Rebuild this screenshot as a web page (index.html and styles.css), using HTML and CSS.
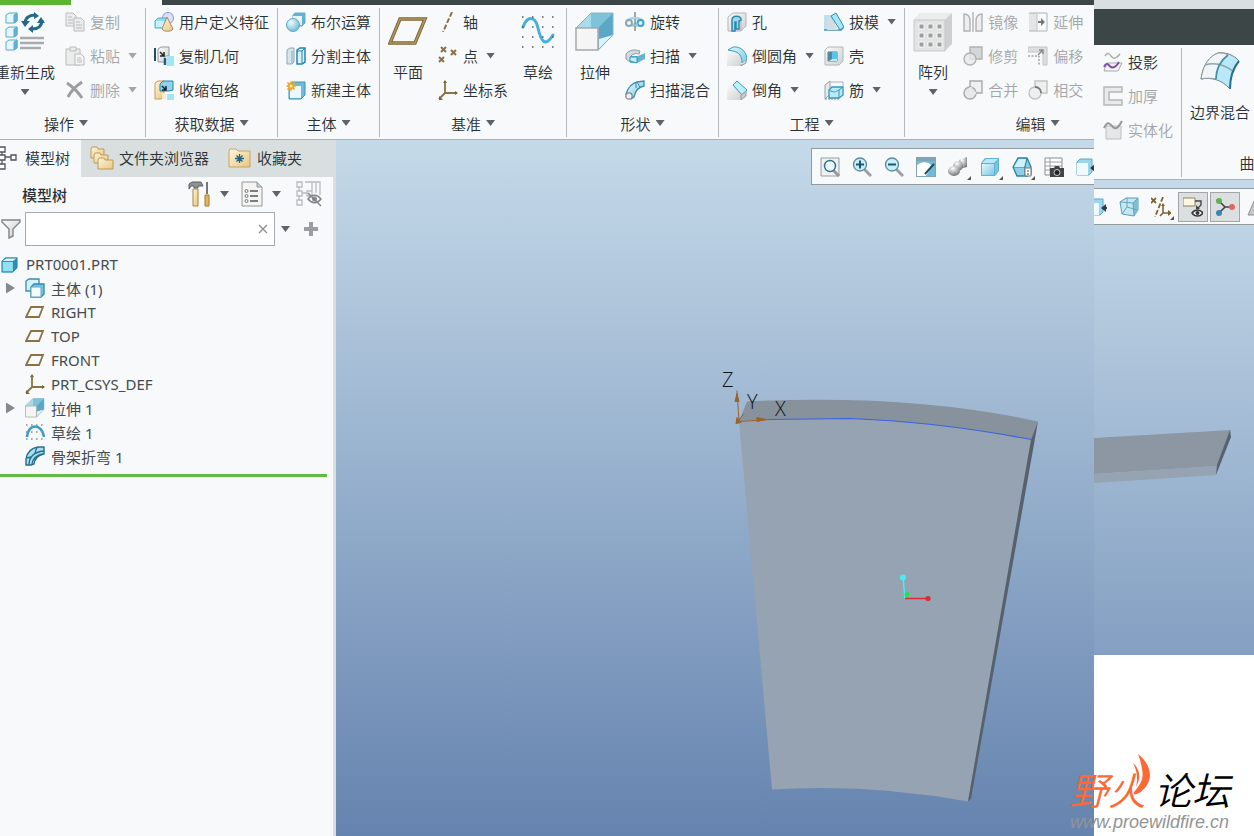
FILE: index.html
```html
<!DOCTYPE html>
<html lang="zh-CN">
<head>
    <meta charset="UTF-8">
    <title>PRT0001</title>
    <link rel="stylesheet" href="styles.css">
</head>
<body>
    <!-- Iconos -->
    <svg class="defs" width="0" height="0">
        <defs>
            <linearGradient id="cy" x1="0" y1="0" x2="1" y2="1"><stop offset="0" stop-color="#e4f7fd"/><stop offset="1" stop-color="#7cc9e4"/></linearGradient>
            <linearGradient id="gr" x1="0" y1="0" x2="1" y2="1"><stop offset="0" stop-color="#fafafa"/><stop offset="1" stop-color="#cfd1d2"/></linearGradient>
            <linearGradient id="tan" x1="0" y1="0" x2="1" y2="1"><stop offset="0" stop-color="#fff6dc"/><stop offset="1" stop-color="#e8c583"/></linearGradient>
            <radialGradient id="ball" cx=".35" cy=".3" r=".8"><stop offset="0" stop-color="#f2fbff"/><stop offset="1" stop-color="#62b4d4"/></radialGradient>
            <radialGradient id="steel" cx=".4" cy=".25" r=".8"><stop offset="0" stop-color="#fff"/><stop offset="1" stop-color="#6c6c6c"/></radialGradient>
        </defs>
        <symbol id="i-cube" viewBox="0 0 20 20"><path d="M1 6l4-5h14v13l-4 5H1z" fill="#5fb3d2"/><path d="M2 6l4-4h12l-4 4z" fill="#b9e8f6"/><path d="M15 7l3-4v11l-3 4z" fill="#7cc3dd"/><path d="M2 7h12v11H2z" fill="url(#cy)"/></symbol>
        <symbol id="i-part" viewBox="0 0 20 20"><path d="M1 6l4-4h14v12l-5 5H1z" fill="#2f8db2" stroke="#2f8db2"/><path d="M2 6l4-3h12l-4 3z" fill="#d5f4fc"/><path d="M2 7h12v11H2z" fill="#93dff3"/></symbol>
        <symbol id="i-regen" viewBox="0 0 40 40">
            <g stroke="#58abc9" fill="#e6f7fd"><path d="M1 3l3-2h8v8l-3 2H1zM1 17l3-2h8v8l-3 2H1zM1 30l3-2h8v8l-3 2H1z"/><path d="M9 3l3-2v8l-3 2zM9 17l3-2v8l-3 2zM9 30l3-2v8l-3 2z" fill="#63b3d0"/></g>
            <path d="M20 12c0-6 4-9 10-9M37 8c0 6-4 9-10 9" fill="none" stroke="#22698a" stroke-width="3"/><path d="M16 9h9l-5 6zM32 11h8l-4-6zM29 0v7l5-3zM28 13v8l-5-4z" fill="#22698a"/>
            <path d="M15 26h24M15 31h24M15 36h21" stroke="#a9abac" stroke-width="2.4"/></symbol>
        <symbol id="i-copy" viewBox="0 0 20 20"><g fill="#ececec" stroke="#b9bbbc"><path d="M1 1h7l3 3v10H1z"/><path d="M9 6h7l3 3v10H9z"/><path d="M11 10h4M11 13h6M11 16h6M3 5h4M3 8h5M3 11h5"/></g></symbol>
        <symbol id="i-paste" viewBox="0 0 20 20"><g fill="#ececec" stroke="#b9bbbc"><path d="M1 3h14v16H1z"/><path d="M5 1h6v4H5z"/><path d="M10 8h6l3 3v8h-9z" fill="#f6f6f6"/><path d="M12 12h4M12 14h5M12 16h5"/></g></symbol>
        <symbol id="i-del" viewBox="0 0 20 20"><path d="M2 3c6 4 11 9 15 15M17 2C11 6 6 11 3 17" fill="none" stroke="#9b9d9e" stroke-width="3"/></symbol>
        <symbol id="i-udf" viewBox="0 0 20 20"><circle cx="14" cy="6" r="5.500" fill="#dfe0fa" stroke="#8c92cf"/><path d="M1 9l3-3h9v7l-3 3H1z" fill="#8fdcf4" stroke="#4bb3d9"/><path d="M2 9h8v6H2z" fill="#c9f0fb"/><path d="M13 5l6 12c-2 3-9 3-11 0z" fill="url(#tan)" stroke="#a88b5c"/></symbol>
        <symbol id="i-geom" viewBox="0 0 20 20"><path d="M1 2v13" stroke="#1d4f66" stroke-width="2"/><path d="M4 3l3-2h8v9h-4v6H4z" fill="url(#gr)" stroke="#999"/><path d="M6 6l4 4M10 6v4H6" stroke="#222" stroke-width="1.5" fill="none"/><path d="M11 12v7" stroke="#1d5f7a" stroke-width="2.5"/><path d="M13 10h7v10h-7z" fill="#9fe6f8"/></symbol>
        <symbol id="i-shrink" viewBox="0 0 20 20"><path d="M1 3l3-2h6v14l-3 4H1z" fill="url(#tan)" stroke="#c79b4a"/><path d="M6 4l3-3h10v9l-4 1H6z" fill="#8fd3ea" stroke="#2484ac"/><path d="M8 6l4 4M12 6v4H8" stroke="#123" stroke-width="1.500" fill="none"/><path d="M13 14h7v6h-7z" fill="#9fe6f8"/><path d="M8 13h4v6H8z" fill="#f7ecd0"/></symbol>
        <symbol id="i-bool" viewBox="0 0 20 20"><path d="M7 3l2-2h10v10l-3 3H7z" fill="#5fb2d3" stroke="#67aecb"/><path d="M7 4h9v9H7z" fill="#e6f6fc"/><circle cx="7" cy="13" r="6.5" fill="url(#ball)" stroke="#5ea9c9"/></symbol>
        <symbol id="i-split" viewBox="0 0 20 20"><path d="M1 4l3-2h4v14l-2 2H1z" fill="#d3e6ec" stroke="#8fa9b3"/><path d="M6 5v12" stroke="#8fa9b3"/><path d="M11 4l3-2h5v14l-3 2h-5z" fill="#d9f1f9" stroke="#2585a9" stroke-width="1.5"/><path d="M16 5v12M11 5h5l3-3" stroke="#2585a9" fill="none"/></symbol>
        <symbol id="i-newbody" viewBox="0 0 20 20"><path d="M3 5l3-3h13v13l-4 4H3z" fill="#72bbd8" stroke="#3f95b7"/><path d="M4 6h11v12H4z" fill="#eaf8fd"/><path d="M5 0l1 3 3-1-1 3 3 1-3 1 1 3-3-1-1 3-1-3-3 1 1-3-3-1 3-1-1-3 3 1z" fill="#f2a524"/><circle cx="5" cy="6" r="1.5" fill="#fff3a0"/></symbol>
        <symbol id="i-plane" viewBox="0 0 40 40"><path d="M12 7h25L27 31H2z" fill="none" stroke="#7c6433" stroke-width="3.4"/><path d="M12 7h25L27 31H2z" fill="none" stroke="#b39561" stroke-width="1.6"/></symbol>
        <symbol id="i-plane-s" viewBox="0 0 20 20"><path d="M6 5h12l-4 10H1z" fill="none" stroke="#8b7245" stroke-width="1.8"/></symbol>
        <symbol id="i-axis" viewBox="0 0 20 20"><path d="M14 0L5 20" stroke="#8b7245" stroke-width="2" stroke-dasharray="5 2"/></symbol>
        <symbol id="i-point" viewBox="0 0 20 20"><path d="M3 1l5 5M8 1L3 6M13 4l5 5M18 4l-5 5M1 11l5 5M6 11l-5 5" stroke="#8b7245" stroke-width="2"/></symbol>
        <symbol id="i-csys" viewBox="0 0 20 20"><path d="M7 2v11h12M7 13l-6 6" fill="none" stroke="#8b7245" stroke-width="1.8"/><path d="M5 3l2-3 2 3zM17 11l3 2-3 2zM1 16v4h4z" fill="#7a6232"/></symbol>
        <symbol id="i-sketch" viewBox="0 0 40 40"><path d="M5 15C9 4 17 3 20 16s7 20 15 7" fill="none" stroke="#47aede" stroke-width="3" stroke-linecap="round"/><path d="M4 5h33M4 15h33M4 25h33M4 35h33" stroke="#555" stroke-width="1.5" stroke-dasharray="1.5 8.5"/></symbol>
        <symbol id="i-extrude" viewBox="0 0 40 40"><path d="M1 16L16 1h22v22L24 38z" fill="#7fc3dc"/><path d="M16 1v15H1z" fill="#a8dcec"/><path d="M16 1h22L24 16h-8z" fill="#7fc3db"/><path d="M38 1v22l-14 4V15z" fill="#5aa8c6"/><path d="M38 23L24 38V27z" fill="#d6f2fb"/><path d="M1 16h22v22H1z" fill="#f5f5f5" stroke="#a5a8aa" stroke-width="1.5"/><path d="M1 16L16 1h22v22L23 38" fill="none" stroke="#86b6c6"/></symbol>
        <symbol id="i-revolve" viewBox="0 0 20 20"><path d="M2 9c3-4 13-4 16 0" fill="none" stroke="#a7d6e6" stroke-width="2.500"/><circle cx="4" cy="11" r="3" fill="#f3f6f7" stroke="#8ea4ad" stroke-width="2"/><circle cx="15.500" cy="11" r="3" fill="#d9f4fd" stroke="#3fa1c8" stroke-width="2"/><path d="M7 13h6" stroke="#8bc4da" stroke-width="3"/><path d="M10 0v20" stroke="#555" stroke-dasharray="5 2"/></symbol>
        <symbol id="i-sweep" viewBox="0 0 20 20"><path d="M1 8c3-4 8-5 14-3l-1 3c-4-1-6 0-8 2l-1 6-4-3z" fill="#d3d9dc" stroke="#8c999e"/><path d="M5 10h8l7-3v6l-8 4H5z" fill="#63b5d3"/><path d="M5 11h7v6l-7-2z" fill="#c9eefa" stroke="#2f94ba"/></symbol>
        <symbol id="i-blend" viewBox="0 0 20 20"><path d="M1 14C3 7 8 3 12 2l7-1v5c-6 1-9 6-10 11l-3 2z" fill="url(#cy)" stroke="#3d8dac" stroke-width="1.3"/><path d="M11 3v5M12 2l3 5" fill="none" stroke="#3d8dac"/><circle cx="4" cy="16" r="3.200" fill="#eee" stroke="#888" stroke-width="1.3"/></symbol>
        <symbol id="i-hole" viewBox="0 0 20 20"><path d="M1 5l5-4h13v13l-5 5H1z" fill="url(#gr)" stroke="#b2b6b8"/><path d="M14 5v14" stroke="#b2b6b8"/><path d="M5 19V8c0-5 9-5 9 0l-2 1v8h-3v-7H8v9z" fill="#9bdcf0" stroke="#2b87aa" stroke-width="1.5"/></symbol>
        <symbol id="i-round" viewBox="0 0 20 20"><path d="M0 5h7c5 1 8 6 8 11l-2 4H0z" fill="url(#gr)"/><path d="M6 1c8-1 14 5 14 13l-5 3c0-7-3-11-9-12L1 4z" fill="url(#cy)" stroke="#3c9fc3"/><path d="M14 18v2l5-3v-3" fill="#d8dadb" stroke="#999"/></symbol>
        <symbol id="i-chamfer" viewBox="0 0 20 20"><path d="M0 5h6l8 9v6H0z" fill="url(#gr)"/><path d="M6 5l4-4 10 9-5 5z" fill="#bdeefb" stroke="#3695b7"/><path d="M14 15v5l5-4v-5z" fill="#c8cacb" stroke="#999"/></symbol>
        <symbol id="i-draft" viewBox="0 0 20 20"><path d="M0 3h11v15H0z" fill="#bfe1ed"/><path d="M0 18h17l3-3" stroke="#4b93ad" stroke-width="1.5" fill="none"/><path d="M3 6h5l6 12H3z" fill="#d4dde0"/><path d="M7 4l5-3 8 14-4 3z" fill="#a9e6f7" stroke="#2b8eb3"/></symbol>
        <symbol id="i-shell" viewBox="0 0 20 20"><path d="M1 4l3-3h15v14l-4 4H1z" fill="url(#gr)" stroke="#b2b6b8"/><path d="M4 6h9v9H4z" fill="#4c8aa2" stroke="#5a8394"/><path d="M8 6h5v7H8z" fill="#5ec3e4"/><path d="M5 15l3-2h5v2z" fill="#bdeaf7"/></symbol>
        <symbol id="i-rib" viewBox="0 0 20 20"><path d="M1 5l5-4v13l-5 5z" fill="#e6e9ea" stroke="#9ca2a5"/><path d="M6 2h13v4" fill="none" stroke="#a9b4b8"/><path d="M5 10l3-3h11v8l-4 3H5z" fill="#b9eaf7" stroke="#3498bd" stroke-width="1.3"/><path d="M5 10c5 3 6 2 10 0v8M15 10l4-3" fill="none" stroke="#3498bd"/><path d="M1 19h14" stroke="#888" stroke-dasharray="2 1"/></symbol>
        <symbol id="i-pattern" viewBox="0 0 40 40"><path d="M1 8l6-7h32v31l-7 7H1z" fill="#cdcfd0"/><path d="M1 8l6-7h32l-7 7z" fill="#ebecec"/><path d="M1 8h31v31H1z" fill="#e2e3e3" stroke="#c6c8c9"/><path d="M6 12h5v5H6zM15 12h5v5h-5zM24 12h5v5h-5zM6 21h5v5H6zM15 21h5v5h-5zM24 21h5v5h-5zM6 30h5v5H6zM15 30h5v5h-5zM24 30h5v5h-5z" fill="#9c9ea0" stroke="#f7f7f7"/></symbol>
        <symbol id="i-mirror" viewBox="0 0 20 20"><g fill="#eee" stroke="#b0b2b3" stroke-width="1.4"><path d="M1 2c5 0 6 3 6 7v10H1zM19 2c-5 0-6 3-6 7v10h6z"/><path d="M10 0v20"/></g></symbol>
        <symbol id="i-trim" viewBox="0 0 20 20"><g stroke="#b0b2b3" stroke-width="1.4"><path d="M7 1h12v12H7z" fill="#d5d6d7"/><circle cx="7" cy="13" r="6" fill="#e8e8e8" fill-opacity=".8"/></g></symbol>
        <symbol id="i-merge" viewBox="0 0 20 20"><g stroke="#a7a9aa" stroke-width="1.4"><path d="M7 1h12v12H7z" fill="#f0f0f0"/><circle cx="7" cy="13" r="6" fill="#e8e8e8"/><path d="M8 7v6h5" fill="none" stroke="#e8e8e8" stroke-width="2.500"/></g></symbol>
        <symbol id="i-extend" viewBox="0 0 20 20"><path d="M1 1h8v18H1z" fill="#e4e5e5"/><path d="M1 1h18v18H1" fill="none" stroke="#b0b2b3"/><path d="M9 2v16" stroke="#c2c2c2"/><path d="M10 10h4" stroke="#777" stroke-width="2"/><path d="M13 6l4 4-4 4z" fill="#777"/></symbol>
        <symbol id="i-offset" viewBox="0 0 20 20"><path d="M0 1h19v18h-4V6H0z" fill="#dedfdf" stroke="#c4c4c4"/><path d="M0 10h11v10" fill="none" stroke="#777" stroke-dasharray="2 1.5"/><path d="M10 9l5-5M11 4h4v4" fill="none" stroke="#888" stroke-width="1.4"/></symbol>
        <symbol id="i-inter" viewBox="0 0 20 20"><g fill="#efefef" stroke="#c2c3c4" stroke-width="1.4"><path d="M7 1h12v12H7z"/><circle cx="7" cy="13" r="6"/></g><path d="M7 7c4 0 6 3 6 6" fill="none" stroke="#777" stroke-width="1.8"/></symbol>
        <symbol id="i-project" viewBox="0 0 20 20"><path d="M2 4c3-5 5-1 7 1s4 2 8-3" fill="none" stroke="#a8abac" stroke-width="1.5"/><path d="M4 11h15l-4 8H1z" fill="#f4f4f4" stroke="#aaa"/><path d="M1 15c3-6 5-1 7 0s5 0 8-5" fill="none" stroke="#7d4fa8" stroke-width="2"/></symbol>
        <symbol id="i-thick" viewBox="0 0 20 20"><path d="M1 1h18v5H6v8h13v5H1z" fill="#e9eaea" stroke="#b4b6b7" stroke-width="1.4"/></symbol>
        <symbol id="i-solid" viewBox="0 0 20 20"><path d="M3 6h15v13H3z" fill="#e5e6e6" stroke="#bcbebf"/><path d="M1 8c4-8 6-4 9-1s5 1 9-6" fill="none" stroke="#949697" stroke-width="2"/></symbol>
        <symbol id="i-boundary" viewBox="0 0 40 40"><path d="M1 27C3 12 10 4 18 1c8-1 16 2 21 8-6 7-9 16-9 28C22 28 12 25 1 27z" fill="#b9e9f8" stroke="#777f84"/><path d="M1 27C3 12 10 4 18 1c4 0 7 0 10 2-8 6-11 14-12 24-5-1-10-1-15 0z" fill="#f0f5f7" stroke="#8d979c"/><path d="M5 13c10-3 20 0 29 7" fill="none" stroke="#8fa3ab" stroke-width="1.5"/><path d="M28 3C20 9 16 17 16 27" fill="none" stroke="#4690ae" stroke-width="1.7"/><path d="M39 9c-6 7-9 16-9 28" fill="none" stroke="#296f8e" stroke-width="2"/></symbol>
        <symbol id="i-tree" viewBox="0 0 20 24"><path d="M5 1v20M5 11h11" stroke="#555b5f" stroke-width="1.3"/><g fill="#fff" stroke="#4d5357" stroke-width="1.3"><path d="M2 1h6v5H2zM2 9h6v5H2zM2 18h6v5H2zM14 9h5v5h-5z"/></g></symbol>
        <symbol id="i-folders" viewBox="0 0 24 24"><g fill="url(#tan)" stroke="#bd9a55"><path d="M1 3l1-2h5l1 2h6v9H1z"/><path d="M4 9l1-2h5l1 2h7v8H4z"/><path d="M8 14l1-2h5l1 2h8v9H8z"/></g></symbol>
        <symbol id="i-fav" viewBox="0 0 24 24"><path d="M1 5l1-2h6l2 2h12v16H1z" fill="url(#tan)" stroke="#c3a566"/><path d="M11.500 8v9M7 12.500h9M8.500 9.500l6 6M14.500 9.500l-6 6" stroke="#1f6485" stroke-width="1.3"/></symbol>
        <symbol id="i-tools" viewBox="0 0 24 26"><path d="M1 3l3-2h9l2 4h-5v2H6V5H3L1 8z" fill="#8d9296" stroke="#5c6165"/><path d="M5 8h5v17H5z" fill="url(#tan)" stroke="#ad8437"/><path d="M19 1v12" stroke="#777" stroke-width="2"/><path d="M17 14h4v11h-4z" fill="#e0b55f" stroke="#a87b2d"/></symbol>
        <symbol id="i-list" viewBox="0 0 22 26"><path d="M1 1h15l5 5v19H1z" fill="#f4f4f3" stroke="#939799"/><path d="M16 1v5h5" fill="#ccc" stroke="#939799"/><path d="M9 10h8M9 15h8M9 20h8" stroke="#555" stroke-width="1.5"/><g fill="none" stroke="#777"><circle cx="5.500" cy="10" r="1.500"/><circle cx="5.500" cy="15" r="1.500"/><circle cx="5.500" cy="20" r="1.500"/></g></symbol>
        <symbol id="i-hidetree" viewBox="0 0 26 26"><g fill="none" stroke="#b9bcbe" stroke-width="1.3"><path d="M1 1h5v5H1zM1 10h5v5H1zM1 19h5v5H1zM11 10h5v5h-5zM6 12h5M3 6v4M3 15v4M9 1h7v9M16 1h8v13M20 1v11"/></g><path d="M12 18c4-5 9-5 13 0-4 5-9 5-13 0z" fill="#f5f5f5" stroke="#7f8385" stroke-width="1.4"/><circle cx="18.500" cy="18" r="2.500" fill="#8a8d8f"/><path d="M12 12l13 13" stroke="#7f8385" stroke-width="1.4"/></symbol>
        <symbol id="i-funnel" viewBox="0 0 20 20"><path d="M1 1h18v2l-7 7v7l-4 2v-9L1 3z" fill="url(#gr)" stroke="#818587" stroke-width="1.4"/></symbol>
        <symbol id="i-plus" viewBox="0 0 20 20"><path d="M8 3h4v5h5v4h-5v5H8v-5H3V8h5z" fill="#9b9ea0"/></symbol>
        <symbol id="i-bodies" viewBox="0 0 20 20"><path d="M1 3l3-2h10v9l-3 3H1z" fill="#d5f1fa" stroke="#398db0" stroke-width="1.3"/><path d="M6 9l3-3h10v10l-3 3H6z" fill="#7bc6e1" stroke="#2f86aa" stroke-width="1.3"/><path d="M6 9h10v10H6z" fill="#f5fcff" stroke="#5ba9c7"/></symbol>
        <symbol id="i-sk" viewBox="0 0 20 20"><path d="M2 15c1-14 15-14 17 0" fill="none" stroke="#3f9cc7" stroke-width="2.6"/><path d="M1 3h19M1 10h19M1 17h19" stroke="#909395" stroke-width="1.6" stroke-dasharray="1.600 3.400"/></symbol>
        <symbol id="i-bend" viewBox="0 0 20 20"><path d="M1 13C2 6 7 2 13 1h6v7c-6 1-9 4-10 10l-3 1H1z" fill="#a7dff1" stroke="#276f8d" stroke-width="1.4"/><path d="M4 19c0-8 5-13 15-14M7 18c1-6 5-9 11-10M2 12l4-1M12 1l-2 6" fill="none" stroke="#276f8d" stroke-width="1.3"/></symbol>
        <symbol id="i-refit" viewBox="0 0 20 20"><path d="M1 1h18v18H1z" fill="#eef1f2" stroke="#999c9e"/><path d="M13 13l6 6" stroke="#999" stroke-width="3"/><circle cx="10" cy="9" r="5.500" fill="#eaf8fd" stroke="#2f6f8c" stroke-width="1.4"/></symbol>
        <symbol id="i-zin" viewBox="0 0 20 20"><path d="M12 12l7 7" stroke="#9c9fa1" stroke-width="3"/><circle cx="8" cy="7.500" r="6.500" fill="#c9eefa" stroke="#5c8799" stroke-width="1.3"/><path d="M4 7.500h8M8 3.500v8" stroke="#1c5873" stroke-width="2"/></symbol>
        <symbol id="i-zout" viewBox="0 0 20 20"><path d="M12 12l7 7" stroke="#9c9fa1" stroke-width="3"/><circle cx="8" cy="7.500" r="6.500" fill="#c9eefa" stroke="#5c8799" stroke-width="1.3"/><path d="M4 7.500h8" stroke="#1c5873" stroke-width="2"/></symbol>
        <symbol id="i-repaint" viewBox="0 0 20 20"><path d="M0 0h20v20H0z" fill="#7fa5b4"/><path d="M1 4h18v15H1z" fill="#6fbbd6"/><path d="M1 8c6-4 11-3 14 0-1 6-4 9-5 11H1z" fill="#fff"/><path d="M9 17L18 7" stroke="#1d5068" stroke-width="2"/></symbol>
        <symbol id="i-shade" viewBox="0 0 20 20"><path d="M11 3l8-3v10l-8 2z" fill="url(#steel)"/><circle cx="10" cy="9" r="5" fill="url(#steel)"/><ellipse cx="6" cy="14" rx="6" ry="5" fill="url(#steel)"/></symbol>
        <symbol id="i-views" viewBox="0 0 20 20"><path d="M1 10l5-9h9l4 9v7l-4 2H5z" fill="#8fd0e6" stroke="#2c82a4" stroke-width="1.3"/><path d="M1 10h12l2-9M13 10v9" fill="none" stroke="#2c82a4"/><path d="M2 10l5-8h7l-2 8z" fill="#d2f1fa"/><path d="M13 11h6v8h-6z" fill="#fff" stroke="#777"/><path d="M15 14h2M15 17h2" stroke="#444"/></symbol>
        <symbol id="i-camera" viewBox="0 0 20 20"><path d="M1 1h17v17H1z" fill="#fff" stroke="#8a8d8f"/><path d="M1 5h17M1 9h17M1 13h17M6 1v17" stroke="#9a9d9f"/><path d="M6 11h4l1-2h4l1 2h4v9H6z" fill="#444"/><circle cx="13" cy="15.500" r="3" fill="#222" stroke="#ccc"/></symbol>
        <symbol id="i-exit" viewBox="0 0 20 20"><path d="M1 5l3-3h12v13l-3 3H1z" fill="#9bd6ea" stroke="#56abc9"/><path d="M1 6h11v12H1z" fill="#eefaff"/><path d="M14 11l5-4v3h5v2h-5v3z" fill="#29404c"/></symbol>
        <symbol id="i-persp" viewBox="0 0 20 20"><path d="M1 5l6-4h12v12l-4 6-12-2z" fill="#c3e9f5" stroke="#5b9db6"/><path d="M14 6l5-5v12l-4 6z" fill="#7fbfd6"/><path d="M1 5l13 1 5-5M14 6l1 13M8 1v9l10 3M8 10l-5 7" fill="none" stroke="#6aa3b8"/></symbol>
        <symbol id="i-datum" viewBox="0 0 20 20"><path d="M0 1l5 5M5 1L0 6" stroke="#7c6433" stroke-width="1.800"/><path d="M12 0L4 20" stroke="#7c6433" stroke-width="1.800" stroke-dasharray="5 2"/><path d="M12 8v8h6M12 16l-3 3" fill="none" stroke="#7c6433" stroke-width="1.600"/><path d="M17 13l4 3-4 3zM10 9l2-3 2 3z" fill="#7c6433"/></symbol>
        <symbol id="i-annot" viewBox="0 0 20 20"><path d="M0 1h12v8H0z" fill="#fff8e0" stroke="#8c8467"/><path d="M12 4h6v4l-3 3" fill="none" stroke="#444" stroke-width="1.4"/><path d="M13 8v4h4z" fill="#444"/><path d="M9 16c3-4 8-4 11 0-3 4-8 4-11 0z" fill="#fff" stroke="#333" stroke-width="1.500"/><circle cx="14.500" cy="16" r="2" fill="#333"/></symbol>
        <symbol id="i-spin" viewBox="0 0 20 20"><path d="M4 4l6 6-6 6M10 10h7" fill="none" stroke="#444" stroke-width="1.6"/><circle cx="4" cy="4" r="3" fill="#62b050"/><circle cx="17" cy="10" r="3" fill="#e26464"/><circle cx="4" cy="16" r="3" fill="#3687b4"/></symbol>
        <symbol id="i-sim" viewBox="0 0 20 20"><path d="M1 18L8 2h9l3 16z" fill="#c5c7c8" stroke="#8e9193"/></symbol>
    </svg>

    <div class="screen">
        <!-- Ventana principal -->
        <section class="window">
            <div class="title-strip"><span class="tab-file"></span><span class="tab-model"></span></div>
            <div class="ribbon ribbon-main">
                <div class="group">
                    <div class="tools">
                        <button class="big"><svg><use href="#i-regen"/></svg>重新生成<i class="caret"></i></button>
                        <div class="col">
                            <button class="tool" disabled><svg><use href="#i-copy"/></svg>复制</button>
                            <button class="tool" disabled><svg><use href="#i-paste"/></svg>粘贴<i class="caret"></i></button>
                            <button class="tool" disabled><svg><use href="#i-del"/></svg>删除<i class="caret"></i></button>
                        </div>
                    </div>
                    <button class="group-name">操作<i class="caret"></i></button>
                </div>
                <div class="group">
                    <div class="tools">
                        <div class="col">
                            <button class="tool"><svg><use href="#i-udf"/></svg>用户定义特征</button>
                            <button class="tool"><svg><use href="#i-geom"/></svg>复制几何</button>
                            <button class="tool"><svg><use href="#i-shrink"/></svg>收缩包络</button>
                        </div>
                    </div>
                    <button class="group-name">获取数据<i class="caret"></i></button>
                </div>
                <div class="group">
                    <div class="tools">
                        <div class="col">
                            <button class="tool"><svg><use href="#i-bool"/></svg>布尔运算</button>
                            <button class="tool"><svg><use href="#i-split"/></svg>分割主体</button>
                            <button class="tool"><svg><use href="#i-newbody"/></svg>新建主体</button>
                        </div>
                    </div>
                    <button class="group-name">主体<i class="caret"></i></button>
                </div>
                <div class="group">
                    <div class="tools">
                        <button class="big"><svg><use href="#i-plane"/></svg>平面</button>
                        <div class="col">
                            <button class="tool"><svg><use href="#i-axis"/></svg>轴</button>
                            <button class="tool"><svg><use href="#i-point"/></svg>点<i class="caret"></i></button>
                            <button class="tool"><svg><use href="#i-csys"/></svg>坐标系</button>
                        </div>
                        <button class="big"><svg><use href="#i-sketch"/></svg>草绘</button>
                    </div>
                    <button class="group-name">基准<i class="caret"></i></button>
                </div>
                <div class="group">
                    <div class="tools">
                        <button class="big"><svg><use href="#i-extrude"/></svg>拉伸</button>
                        <div class="col">
                            <button class="tool"><svg><use href="#i-revolve"/></svg>旋转</button>
                            <button class="tool"><svg><use href="#i-sweep"/></svg>扫描<i class="caret"></i></button>
                            <button class="tool"><svg><use href="#i-blend"/></svg>扫描混合</button>
                        </div>
                    </div>
                    <button class="group-name">形状<i class="caret"></i></button>
                </div>
                <div class="group">
                    <div class="tools">
                        <div class="col">
                            <button class="tool"><svg><use href="#i-hole"/></svg>孔</button>
                            <button class="tool"><svg><use href="#i-round"/></svg>倒圆角<i class="caret"></i></button>
                            <button class="tool"><svg><use href="#i-chamfer"/></svg>倒角<i class="caret"></i></button>
                        </div>
                        <div class="col">
                            <button class="tool"><svg><use href="#i-draft"/></svg>拔模<i class="caret"></i></button>
                            <button class="tool"><svg><use href="#i-shell"/></svg>壳</button>
                            <button class="tool"><svg><use href="#i-rib"/></svg>筋<i class="caret"></i></button>
                        </div>
                    </div>
                    <button class="group-name">工程<i class="caret"></i></button>
                </div>
                <div class="group group-edit">
                    <div class="tools">
                        <button class="big"><svg><use href="#i-pattern"/></svg>阵列<i class="caret"></i></button>
                        <div class="col">
                            <button class="tool" disabled><svg><use href="#i-mirror"/></svg>镜像</button>
                            <button class="tool" disabled><svg><use href="#i-trim"/></svg>修剪</button>
                            <button class="tool" disabled><svg><use href="#i-merge"/></svg>合并</button>
                        </div>
                        <div class="col">
                            <button class="tool" disabled><svg><use href="#i-extend"/></svg>延伸</button>
                            <button class="tool" disabled><svg><use href="#i-offset"/></svg>偏移</button>
                            <button class="tool" disabled><svg><use href="#i-inter"/></svg>相交</button>
                        </div>
                    </div>
                    <button class="group-name">编辑<i class="caret"></i></button>
                </div>
            </div>

            <div class="work">
                <!-- Árbol del modelo -->
                <aside class="panel">
                    <nav class="tabs">
                        <button class="tab active"><svg><use href="#i-tree"/></svg>模型树</button>
                        <button class="tab"><svg><use href="#i-folders"/></svg>文件夹浏览器</button>
                        <button class="tab"><svg><use href="#i-fav"/></svg>收藏夹</button>
                    </nav>
                    <div class="panel-body">
                        <div class="panel-head">
                            <h2>模型树</h2>
                            <button class="head-btn" aria-label="设置"><svg><use href="#i-tools"/></svg><i class="caret"></i></button>
                            <button class="head-btn" aria-label="显示"><svg><use href="#i-list"/></svg><i class="caret"></i></button>
                            <button class="head-btn hide-tree" aria-label="隐藏树"><svg><use href="#i-hidetree"/></svg></button>
                        </div>
                        <div class="filter">
                            <label for="buscar" aria-label="过滤"><svg><use href="#i-funnel"/></svg></label>
                            <div class="search">
                                <input type="text" id="buscar">
                                <button class="clear" aria-label="清除"><svg viewBox="0 0 10 10"><path d="M1 1l8 8M9 1L1 9"/></svg></button>
                            </div>
                            <button class="more" aria-label="选项"><i class="caret"></i></button>
                            <button class="add" aria-label="添加"><svg><use href="#i-plus"/></svg></button>
                        </div>
                        <ul class="tree">
                            <li class="root"><svg><use href="#i-part"/></svg>PRT0001.PRT</li>
                            <li><i class="expand"></i><svg><use href="#i-bodies"/></svg>主体 (1)</li>
                            <li><svg><use href="#i-plane-s"/></svg>RIGHT</li>
                            <li><svg><use href="#i-plane-s"/></svg>TOP</li>
                            <li><svg><use href="#i-plane-s"/></svg>FRONT</li>
                            <li><svg><use href="#i-csys"/></svg>PRT_CSYS_DEF</li>
                            <li><i class="expand"></i><svg><use href="#i-extrude"/></svg>拉伸 1</li>
                            <li><svg><use href="#i-sk"/></svg>草绘 1</li>
                            <li><svg><use href="#i-bend"/></svg>骨架折弯 1</li>
                        </ul>
                        <div class="insert-line"></div>
                    </div>
                </aside>

                <!-- Vista 3D -->
                <main class="canvas">
                    <svg class="model" viewBox="0 0 758 696">
                        <path d="M403 281L411 261Q575 253 702 281L695 299Q545 275 403 281z" fill="#87929d"/>
                        <path d="M403 281Q418 278 514 278Q600 281 695 299L632 661Q534 643 436 649z" fill="#96a3b2"/>
                        <path d="M695 299L702 281L635 658L632 661z" fill="#56616b"/>
                        <path d="M432 279L514 278Q600 281 695 299" fill="none" stroke="#3a62e0" stroke-width="1.2"/>
                        <g stroke="#9c622b" fill="#9c622b"><path d="M403 281L401 250M403 281L434 279M400 283L408 273"/><path d="M401 253l-2 8h4zM430 279l-9-2v4zM401 277l-1 6 5-1z"/></g>
                        <g class="axis-name"><text x="386" y="246">Z</text><text x="411" y="268">Y</text><text x="439" y="275">X</text></g>
                        <path d="M569 458L567 437" stroke="#3ff0fa" stroke-width="1.500"/><circle cx="567" cy="437" r="3" fill="#3ff0fa"/>
                        <path d="M569 458h23" stroke="#dc2b35" stroke-width="1.500"/><circle cx="592" cy="458" r="2.600" fill="#dc2b35"/>
                        <circle cx="571" cy="454" r="2.400" fill="#2cdc4b"/>
                    </svg>
                    <div class="view-bar view-bar-main">
                        <button aria-label="重新调整"><svg><use href="#i-refit"/></svg></button>
                        <button aria-label="放大"><svg><use href="#i-zin"/></svg></button>
                        <button aria-label="缩小"><svg><use href="#i-zout"/></svg></button>
                        <button aria-label="重画"><svg><use href="#i-repaint"/></svg></button>
                        <button class="drop" aria-label="渲染选项"><svg><use href="#i-shade"/></svg></button>
                        <button class="drop" aria-label="显示样式"><svg><use href="#i-cube"/></svg></button>
                        <button class="drop" aria-label="已保存方向"><svg><use href="#i-views"/></svg></button>
                        <button aria-label="视图管理器"><svg><use href="#i-camera"/></svg></button>
                        <button aria-label="视图"><svg><use href="#i-exit"/></svg></button>
                    </div>
                </main>
            </div>
        </section>

        <!-- Segunda ventana -->
        <section class="window window-side">
            <div class="title-side"></div>
            <div class="ribbon">
                <div class="group">
                    <div class="tools">
                        <div class="col">
                            <button class="tool"><svg><use href="#i-project"/></svg>投影</button>
                            <button class="tool" disabled><svg><use href="#i-thick"/></svg>加厚</button>
                            <button class="tool" disabled><svg><use href="#i-solid"/></svg>实体化</button>
                        </div>
                    </div>
                </div>
                <div class="group group-surface">
                    <div class="tools">
                        <button class="big"><svg><use href="#i-boundary"/></svg>边界混合</button>
                    </div>
                    <button class="group-name">曲面<i class="caret"></i></button>
                </div>
            </div>
            <div class="canvas canvas-side">
                <svg class="model" viewBox="0 0 160 475">
                    <path d="M0 258L137 250L124 286L0 294z" fill="#8c97a3"/>
                    <path d="M0 294L124 286L122 295L0 303z" fill="#96a3b2"/>
                    <path d="M136 250L137 257L122 295L123 285z" fill="#56616f"/>
                </svg>
                <div class="view-bar view-bar-side">
                    <button aria-label="视图"><svg><use href="#i-exit"/></svg></button>
                    <button aria-label="透视图"><svg><use href="#i-persp"/></svg></button>
                    <button class="drop" aria-label="基准显示"><svg><use href="#i-datum"/></svg></button>
                    <button class="pressed" aria-label="注释显示"><svg><use href="#i-annot"/></svg></button>
                    <button class="pressed" aria-label="旋转中心"><svg><use href="#i-spin"/></svg></button>
                    <button aria-label="模拟"><svg><use href="#i-sim"/></svg></button>
                </div>
            </div>
        </section>

        <div class="watermark">
            <div class="brand"><span class="fire">野火</span><span>论坛</span></div>
            <svg class="flame" viewBox="0 0 20 44"><path d="M6 1c10 8 15 19 10 29-2 5-6 8-11 11-3 1-4 0-3-2 7-8 10-14 8-23C9 10 8 6 6 1z" fill="#fb6a35"/><path d="M1 10c6 5 9 14 3 24 2-9 1-16-3-24z" fill="#fb6a35"/></svg>
            <a href="#">www.proewildfire.cn</a>
        </div>
    </div>
</body>
</html>
```
FILE: styles.css
```css
* { box-sizing: border-box; }
body { margin: 0; font-family: "Noto Sans", "Noto Sans CJK SC", sans-serif; font-size: 15px; font-weight: 350; color: #2a3135; background: #fff; }
button { font: inherit; color: inherit; background: none; border: 0; padding: 0; white-space: nowrap; }
button:disabled { color: #a3a6a8; }
svg { display: block; flex: none; }
.defs { position: absolute; }

.screen { position: relative; display: grid; grid-template-columns: minmax(0, 1fr) 160px; min-height: 100vh; overflow: hidden; }
.window { display: flex; flex-direction: column; min-width: 0; overflow: hidden; }
.window-side { margin-bottom: 182px; }

/* barra de título */
.title-strip { display: flex; height: 5px; background: #3c4646; }
.tab-file { width: 71px; background: #5cb531; }
.tab-model { width: 91px; background: #f7f9fb; }
.title-side { height: 45px; background: #3c4646; border-top: 9px solid #d9dfde; }

/* cinta */
.ribbon { display: flex; height: 135px; background: #f7f9fb; border-bottom: 1px solid #a7b3b9; overflow: hidden; }
.ribbon-main > .group:first-child { margin-left: -13px; }
.group { flex: none; display: flex; flex-direction: column; padding: 0 8px; border-right: 1px solid #b3b9bd; margin: 3px 0 2px; }
.group-edit { width: 266px; }
.group-surface { width: 160px; }
.tools { display: flex; gap: 10px; height: 101px; margin-top: -3px; }
.col { display: flex; flex-direction: column; gap: 1px; }
.tool { display: flex; align-items: center; gap: 5px; height: 33px; }
.tool svg { width: 20px; height: 20px; }
.tool .caret { margin-left: 3px; }
.big { display: flex; flex-direction: column; align-items: center; min-width: 40px; padding-top: 7px; line-height: 20px; }
.big svg { width: 40px; height: 40px; margin-bottom: 10px; }
.big .caret { margin-top: 7px; }
.group-name { display: flex; align-items: center; justify-content: center; gap: 5px; height: 30px; margin-top: 3px; }
.caret { flex: none; width: 9px; height: 6px; background: #5d6468; clip-path: polygon(0 0, 100% 0, 50% 100%); }
button:disabled .caret { background: #a3a6a8; }
.window-side .group:first-child { padding-left: 9px; }

/* panel izquierdo */
.work { flex: 1; display: flex; min-height: 0; }
.panel { flex: none; width: 336px; display: flex; flex-direction: column; background: #d9dfde; border-right: 3px solid #d9dfde; }
.tabs { display: flex; height: 37px; }
.tab { display: flex; align-items: center; gap: 5px; padding: 0 10px 2px 9px; }
.tab svg { width: 24px; height: 24px; }
.tab.active { background: #f7f9fb; gap: 8px; padding: 0 11px 2px 0; }
.tab.active svg { width: 20px; margin-left: -3px; }
.panel-body { flex: 1; background: #f7f9fb; }
.panel-head { display: flex; align-items: center; gap: 11px; height: 34px; padding: 0 10px 0 22px; }
.panel-head h2 { flex: 1; margin: 0; font-size: 15px; font-weight: 500; }
.head-btn { display: flex; align-items: center; gap: 8px; }
.head-btn svg { width: 24px; height: 26px; }
.hide-tree { margin-left: 3px; }
.hide-tree svg { width: 28px; }
.filter { display: flex; align-items: center; height: 36px; padding-right: 12px; }
.filter label { width: 25px; }
.filter label svg { width: 22px; height: 20px; }
.search { flex: 1; display: flex; align-items: center; height: 34px; background: #fff; border: 1px solid #a6abad; }
.search input { flex: 1; min-width: 0; height: 30px; border: 0; outline: 0; background: none; font: inherit; }
.clear { padding: 0 6px; }
.clear svg { width: 10px; height: 10px; fill: none; stroke: #8b8f91; stroke-width: 1.4; }
.more { display: flex; padding: 0 6px; }
.add { padding-left: 5px; }
.add svg { width: 20px; height: 20px; }

.tree { list-style: none; margin: 5px 0 6px; padding: 0; font-weight: 400; color: #454b50; }
.tree li { display: flex; align-items: center; gap: 6px; height: 24px; padding-left: 25px; }
.tree li svg { width: 20px; height: 20px; }
.tree .root { padding-left: 0; gap: 7px; }
.tree .root svg { width: 19px; height: 17px; }
.expand { width: 9px; height: 11px; margin: 0 4px 0 -19px; background: #85898c; clip-path: polygon(0 0, 100% 50%, 0 100%); }
.insert-line { height: 3px; margin-right: 6px; background: #63bb46; }

/* vista */
.canvas { position: relative; flex: 1; min-width: 0; overflow: hidden; background: linear-gradient(#c5dae9, #6583af); }
.canvas-side { background: linear-gradient(#c5dae9, #6583af 147%); }
.model { width: 100%; height: 100%; }
.axis-name { font-family: "Open Sans", sans-serif; font-size: 20px; font-weight: 300; fill: #10151c; }
.view-bar { position: absolute; top: 8px; display: flex; align-items: center; gap: 4px; height: 37px; padding-left: 4px; background: #f7f9fb; border: 1px solid #929a9f; }
.view-bar-main { right: -7px; }
.view-bar-side { left: -16px; }
.view-bar button { position: relative; display: grid; place-items: center; width: 28px; height: 28px; }
.view-bar svg { width: 20px; height: 20px; }
.view-bar .drop::after { content: ""; position: absolute; right: 1px; bottom: 1px; border: 2px solid #555; border-top-color: transparent; border-left-color: transparent; }
.view-bar .pressed { background: #dcdfe0; outline: 1px solid #a2a6a8; }

/* marca de agua */
.watermark { position: absolute; right: 20px; bottom: 6px; width: 164px; }
.brand { display: flex; gap: 8px; font-family: "Noto Sans CJK SC", sans-serif; font-size: 38px; font-weight: 350; font-style: italic; line-height: 48px; color: #000; }
.fire { color: #fb6a35; }
.flame { position: absolute; left: 62px; top: -12px; width: 20px; height: 44px; }
.watermark a { display: block; font: italic 18px/18px "Liberation Sans", Arial, sans-serif; color: #929496; text-decoration: none; }
```
